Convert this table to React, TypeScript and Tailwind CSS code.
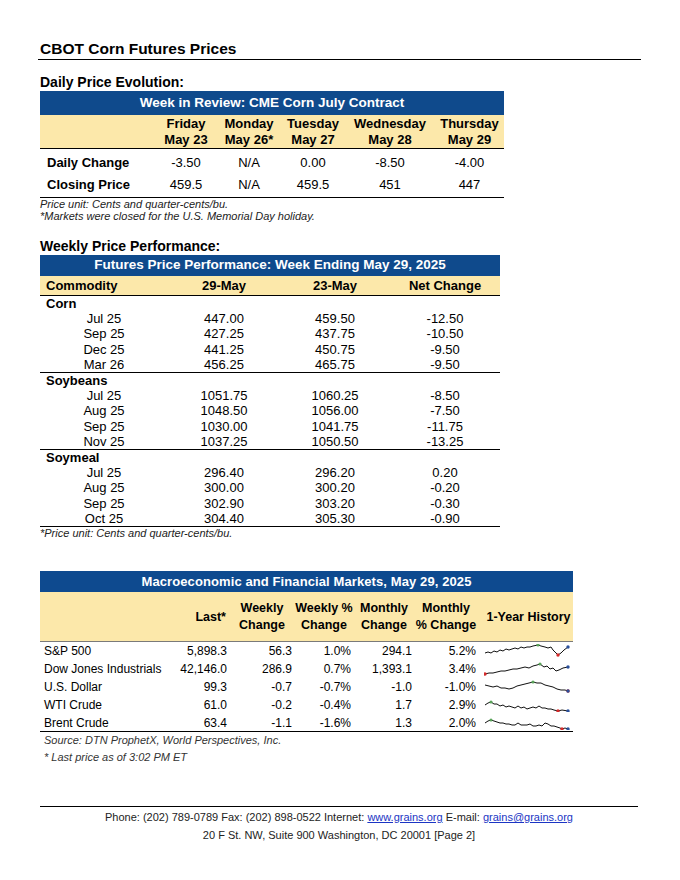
type Spark = {
  pts: [number, number][];
  hi: number;
  lo: number;
};

const sparks: Record<string, Spark> = {
  sp: {
    pts: [[1,9],[4,8],[7,9],[10,7],[13,8],[16,6],[19,7],[22,5],[25,6],[28,5],[31,4],[34,5],[37,3],[40,4],[43,3],[46,3],[49,2],[54,1],[57,2],[61,3],[64,4],[67,3],[69,6],[72,9],[74,11],[77,9],[80,6],[84,3]],
    hi: 17,
    lo: 24
  },
  dow: {
    pts: [[1,12],[5,11],[9,11],[13,10],[17,9],[21,9],[25,8],[29,7],[33,7],[37,6],[41,5],[45,6],[49,4],[53,3],[56,2],[60,5],[63,4],[66,7],[69,6],[72,9],[75,8],[79,6],[84,5]],
    hi: 14,
    lo: 0
  },
  usd: {
    pts: [[1,5],[5,6],[9,7],[13,6],[17,8],[21,8],[25,9],[29,8],[33,6],[37,5],[41,4],[45,3],[49,2],[53,3],[57,3],[61,5],[65,6],[69,7],[73,9],[77,10],[81,10],[84,11]],
    hi: 12,
    lo: 21
  },
  wti: {
    pts: [[1,7],[4,5],[7,4],[10,6],[13,6],[16,8],[19,7],[22,9],[25,8],[28,9],[31,10],[34,8],[37,10],[40,9],[43,11],[46,10],[49,9],[52,10],[55,8],[58,10],[61,10],[64,11],[67,11],[70,12],[74,13],[78,12],[84,13]],
    hi: 2,
    lo: 24
  },
  brent: {
    pts: [[1,7],[4,5],[7,4],[10,5],[13,6],[16,7],[19,7],[22,8],[25,8],[28,9],[31,9],[34,7],[37,9],[40,9],[43,9],[46,8],[49,10],[52,10],[55,9],[58,10],[61,7],[64,8],[67,10],[70,10],[73,11],[76,12],[78,13],[81,12],[84,13]],
    hi: 2,
    lo: 26
  }
};

function Sparkline({ data }: { data: Spark }) {
  const last = data.pts[data.pts.length - 1];
  const hi = data.pts[data.hi];
  const lo = data.pts[data.lo];
  return (
    <svg width="88" height="14" viewBox="0 0 88 14" className="block">
      <polyline
        points={data.pts.map((p) => p.join(",")).join(" ")}
        fill="none"
        stroke="#111"
        strokeWidth="1"
      />
      <circle cx={hi[0]} cy={hi[1]} r="1.6" fill="#5aa35a" />
      <circle cx={lo[0]} cy={lo[1]} r="1.7" fill="#d42a2a" />
      <circle cx={last[0]} cy={last[1]} r="1.7" fill="#2a4f9a" />
    </svg>
  );
}

const days = [
  { day: "Friday", date: "May 23", change: "-3.50", close: "459.5" },
  { day: "Monday", date: "May 26*", change: "N/A", close: "N/A" },
  { day: "Tuesday", date: "May 27", change: "0.00", close: "459.5" },
  { day: "Wednesday", date: "May 28", change: "-8.50", close: "451" },
  { day: "Thursday", date: "May 29", change: "-4.00", close: "447" }
];

const groups = [
  {
    name: "Corn",
    rows: [
      ["Jul 25", "447.00", "459.50", "-12.50"],
      ["Sep 25", "427.25", "437.75", "-10.50"],
      ["Dec 25", "441.25", "450.75", "-9.50"],
      ["Mar 26", "456.25", "465.75", "-9.50"]
    ]
  },
  {
    name: "Soybeans",
    rows: [
      ["Jul 25", "1051.75", "1060.25", "-8.50"],
      ["Aug 25", "1048.50", "1056.00", "-7.50"],
      ["Sep 25", "1030.00", "1041.75", "-11.75"],
      ["Nov 25", "1037.25", "1050.50", "-13.25"]
    ]
  },
  {
    name: "Soymeal",
    rows: [
      ["Jul 25", "296.40", "296.20", "0.20"],
      ["Aug 25", "300.00", "300.20", "-0.20"],
      ["Sep 25", "302.90", "303.20", "-0.30"],
      ["Oct 25", "304.40", "305.30", "-0.90"]
    ]
  }
];

const markets = [
  { name: "S&P 500", last: "5,898.3", wc: "56.3", wp: "1.0%", mc: "294.1", mp: "5.2%", spark: sparks.sp },
  { name: "Dow Jones Industrials", last: "42,146.0", wc: "286.9", wp: "0.7%", mc: "1,393.1", mp: "3.4%", spark: sparks.dow },
  { name: "U.S. Dollar", last: "99.3", wc: "-0.7", wp: "-0.7%", mc: "-1.0", mp: "-1.0%", spark: sparks.usd },
  { name: "WTI Crude", last: "61.0", wc: "-0.2", wp: "-0.4%", mc: "1.7", mp: "2.9%", spark: sparks.wti },
  { name: "Brent Crude", last: "63.4", wc: "-1.1", wp: "-1.6%", mc: "1.3", mp: "2.0%", spark: sparks.brent }
];

export default function App() {
  return (
    <div className="w-[680px] h-[880px] bg-white px-[40px] pt-[40px] text-black font-['Liberation_Sans',Arial,sans-serif]">
      {/* page title */}
      <h1 className="-ml-[2px] w-[603px] border-b border-black pl-[2px] text-[15.5px] font-bold leading-[18px] pb-[1px]">
        CBOT Corn Futures Prices
      </h1>

      {/* daily table */}
      <h2 className="mt-[14px] text-[14px] font-bold leading-[17px]">Daily Price Evolution:</h2>
      <div className="w-[464px]">
        <div className="flex h-[24px] items-center justify-center bg-[#0f4a8c] text-[13.5px] font-bold text-white">
          Week in Review: CME Corn July Contract
        </div>
        <div className="grid grid-cols-[115px_62px_64px_64px_90px_69px] border-b border-black bg-[#fce8aa] pt-[1px] text-[13px] font-bold leading-[16px]">
          <div />
          {days.map((d) => (
            <div key={d.day} className="text-center">
              {d.day}
              <br />
              {d.date}
            </div>
          ))}
        </div>
        <div className="grid h-[24px] grid-cols-[115px_62px_64px_64px_90px_69px] items-center pt-[3px] text-[13px]">
          <div className="pl-[7px] font-bold">Daily Change</div>
          {days.map((d) => (
            <div key={d.day} className="text-center">{d.change}</div>
          ))}
        </div>
        <div className="grid h-[25px] grid-cols-[115px_62px_64px_64px_90px_69px] items-center border-b border-black text-[13px]">
          <div className="pl-[7px] font-bold">Closing Price</div>
          {days.map((d) => (
            <div key={d.day} className="text-center">{d.close}</div>
          ))}
        </div>
      </div>
      <p className="text-[11px] italic leading-[12px] text-[#222]">Price unit: Cents and quarter-cents/bu.</p>
      <p className="text-[11px] italic leading-[12px] text-[#222]">*Markets were closed for the U.S. Memorial Day holiday.</p>

      {/* weekly table */}
      <h2 className="mt-[16px] text-[14px] font-bold leading-[17px]">Weekly Price Performance:</h2>
      <div className="w-[460px]">
        <div className="flex h-[21px] items-center justify-center bg-[#0f4a8c] text-[13.5px] font-bold text-white">
          Futures Price Performance: Week Ending May 29, 2025
        </div>
        <div className="grid h-[20px] grid-cols-[128px_112px_110px_110px] items-center border-b border-black bg-[#fce8aa] text-[13px] font-bold">
          <div className="pl-[6px]">Commodity</div>
          <div className="text-center">29-May</div>
          <div className="text-center">23-May</div>
          <div className="text-center">Net Change</div>
        </div>
        {groups.map((g) => (
          <div key={g.name} className="border-b border-black text-[13px] leading-[15.2px]">
            <div className="pl-[6px] font-bold">{g.name}</div>
            {g.rows.map((r) => (
              <div key={r[0]} className="grid grid-cols-[128px_112px_110px_110px]">
                {r.map((c, i) => (
                  <div key={i} className="text-center">{c}</div>
                ))}
              </div>
            ))}
          </div>
        ))}
      </div>
      <p className="text-[11px] italic leading-[13px] text-[#222]">*Price unit: Cents and quarter-cents/bu.</p>

      {/* macro table */}
      <div className="mt-[31px] w-[533px] text-[12px]">
        <div className="flex h-[21px] items-center justify-center bg-[#0e4a8f] text-[13px] font-bold tracking-[0.1px] text-white">
          Macroeconomic and Financial Markets, May 29, 2025
        </div>
        <div className="grid h-[50px] grid-cols-[125px_65px_64px_60px_60px_64px_95px] items-center border-b border-[#7a7a7a] bg-[#fce8aa] pt-[1px] text-[12.5px] font-bold leading-[17px]">
          <div />
          <div className="pr-[4px] text-right">Last*</div>
          <div className="text-center">Weekly<br />Change</div>
          <div className="text-center">Weekly %<br />Change</div>
          <div className="text-center">Monthly<br />Change</div>
          <div className="text-center">Monthly<br />% Change</div>
          <div className="pl-[6px] text-center">1-Year History</div>
        </div>
        <div className="border-b border-black">
          {markets.map((m) => (
            <div key={m.name} className="grid h-[17.8px] grid-cols-[125px_65px_64px_60px_60px_64px_95px] items-center pt-[1px] leading-[16px]">
              <div className="pl-[4px]">{m.name}</div>
              <div className="pr-[3px] text-right">{m.last}</div>
              <div className="pr-[2px] text-right">{m.wc}</div>
              <div className="pr-[3px] text-right">{m.wp}</div>
              <div className="pr-[2px] text-right">{m.mc}</div>
              <div className="pr-[2px] text-right">{m.mp}</div>
              <div className="pl-[6px]">
                <Sparkline data={m.spark} />
              </div>
            </div>
          ))}
        </div>
        <p className="pl-[4px] text-[11px] italic leading-[17px] text-[#333]">Source: DTN ProphetX, World Perspectives, Inc.</p>
        <p className="pl-[4px] text-[11px] italic leading-[17px] text-[#333]">* Last price as of 3:02 PM ET</p>
      </div>

      {/* footer */}
      <div className="mt-[40px] w-[598px] border-t border-black pt-[1px] text-center text-[11px] leading-[18px] text-[#222]">
        <p>
          Phone: (202) 789-0789 Fax: (202) 898-0522 Internet:{" "}
          <a className="text-[#1b35c4] underline">www.grains.org</a> E-mail:{" "}
          <a className="text-[#1b35c4] underline">grains@grains.org</a>
        </p>
        <p>20 F St. NW, Suite 900 Washington, DC 20001 [Page 2]</p>
      </div>
    </div>
  );
}
